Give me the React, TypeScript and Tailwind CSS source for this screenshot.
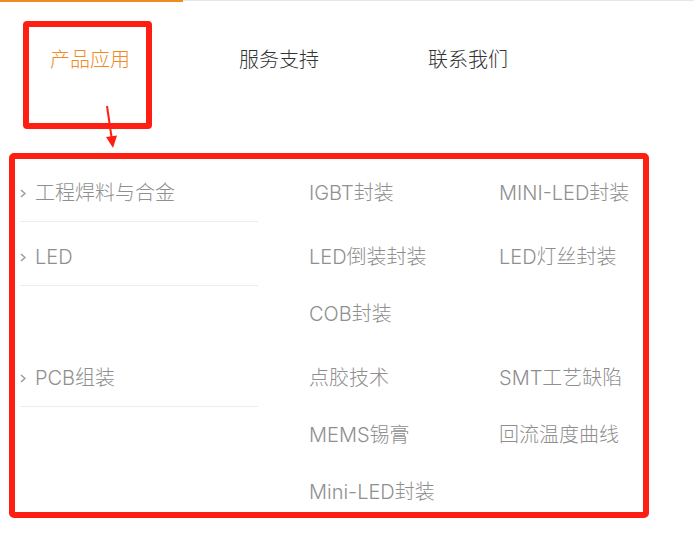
const font = { fontFamily: 'Inter, "Noto Sans CJK SC", sans-serif' };

type Row = { title: string; items: string[] };

const rows: Row[] = [
  { title: "工程焊料与合金", items: ["IGBT封装", "MINI-LED封装"] },
  { title: "LED", items: ["LED倒装封装", "LED灯丝封装", "COB封装"] },
  {
    title: "PCB组装",
    items: ["点胶技术", "SMT工艺缺陷", "MEMS锡膏", "回流温度曲线", "Mini-LED封装"],
  },
];

function Chevron() {
  return (
    <svg width="6" height="9" viewBox="0 0 6 9" className="shrink-0">
      <polyline points="1,1 5,4.5 1,8" fill="none" stroke="#9a9a9a" strokeWidth="1.5" />
    </svg>
  );
}

export default function App() {
  return (
    <div className="w-[694px] h-[535px] bg-white overflow-hidden" style={font}>
      {/* top progress line */}
      <div className="flex h-[2px]">
        <div className="w-[183px] h-[2px] bg-[#f08a24]" />
        <div className="flex-1 h-px bg-[#e6e6e6]" />
      </div>

      {/* nav */}
      <div className="h-[99px] pt-[44px] pl-[50px] flex gap-[109px] text-[20px] leading-[28px] font-light">
        <div className="relative text-[#f08a24]">
          产品应用
          <div className="absolute -left-[27px] -right-[22px] -top-[25px] -bottom-[28px] border-[6px] border-[#ff1e12] rounded-[4px]" />
        </div>
        <div className="text-[#333]">服务支持</div>
        <div className="text-[#333]">联系我们</div>
      </div>

      {/* arrow */}
      <div className="h-[52px]">
        <svg width="694" height="52" viewBox="0 101 694 52">
          <line x1="107" y1="106" x2="111.8" y2="139" stroke="#ff1e12" strokeWidth="2" />
          <polygon points="106,137 117,135.5 113,148" fill="#ff1e12" />
        </svg>
      </div>

      {/* dropdown panel */}
      <div className="ml-[9px] w-[640px] h-[365px] border-[6px] border-[#ff1e12] rounded-[5px] pt-[20px] text-[20px] leading-[28px] font-light text-[#8f8f8f]">
        {rows.map((row) => (
          <div key={row.title} className="flex items-start">
            <div className="ml-[5px] w-[238px] pb-[14px] border-b border-[#ececec]">
              <div className="flex items-center gap-[9px]">
                <Chevron />
                <span>{row.title}</span>
              </div>
            </div>
            <div className="ml-[51px] pb-[36px] grid grid-cols-[190px_1fr] gap-y-[29px]">
              {row.items.map((it) => (
                <div key={it} className="whitespace-nowrap">
                  {it}
                </div>
              ))}
            </div>
          </div>
        ))}
      </div>
    </div>
  );
}
